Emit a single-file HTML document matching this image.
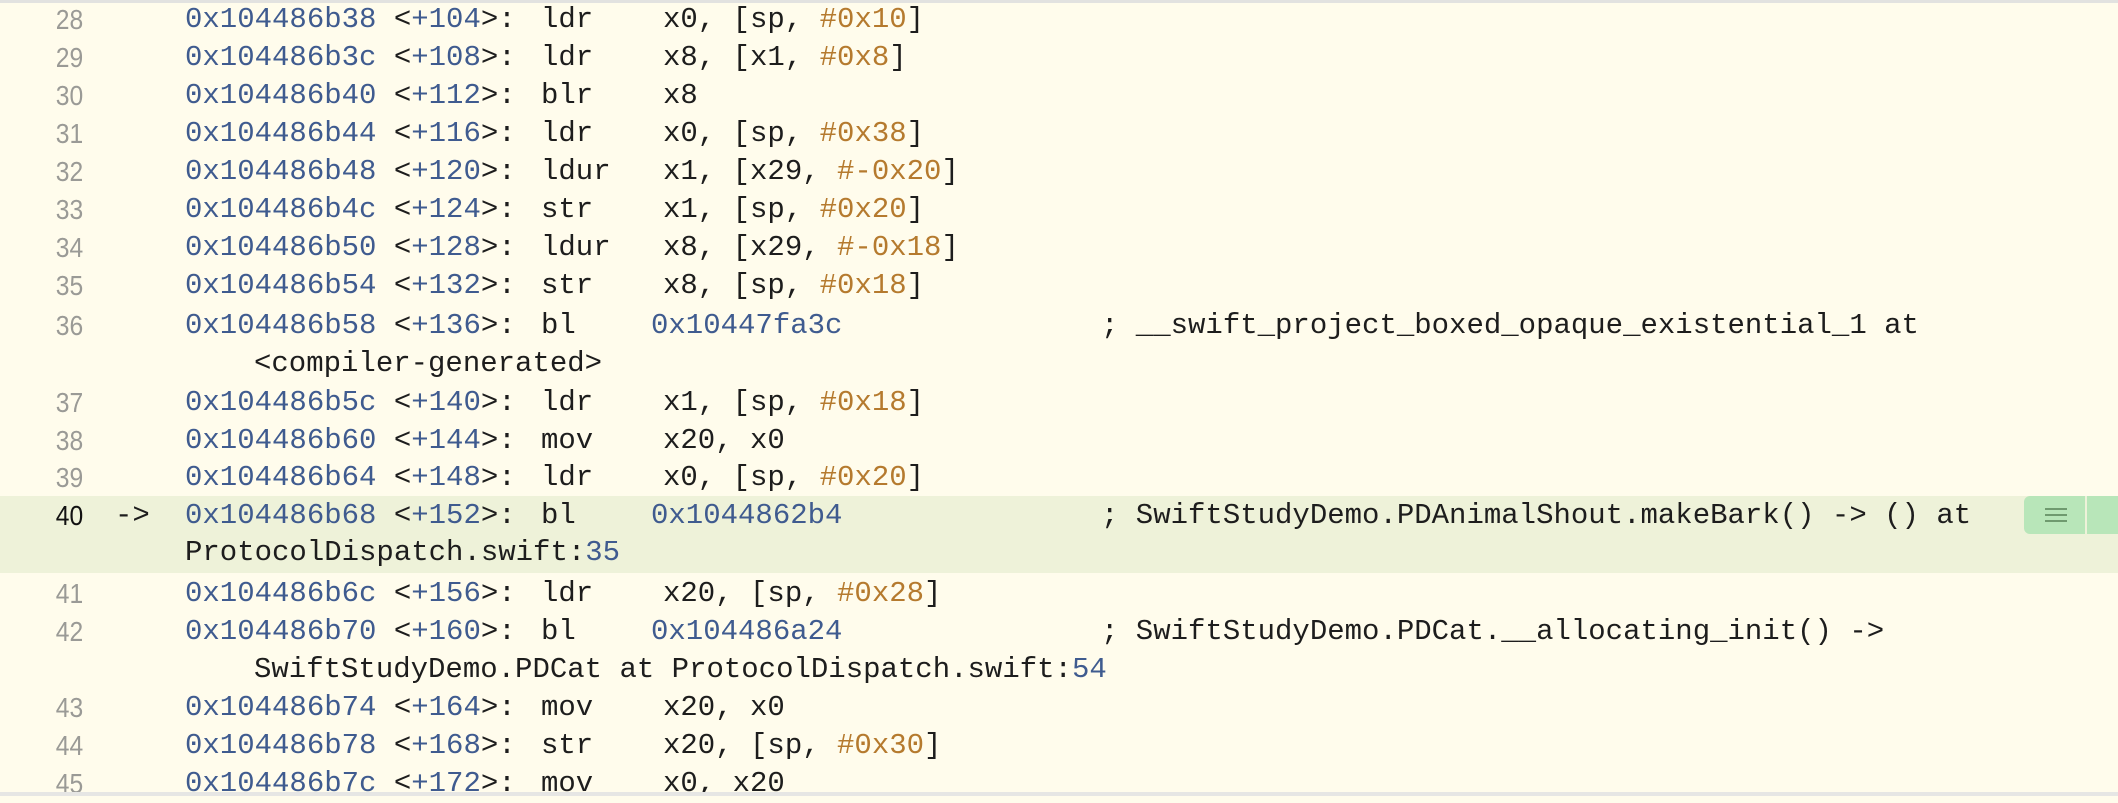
<!DOCTYPE html>
<html><head><meta charset="utf-8"><style>
html,body{margin:0;padding:0}
body{width:2118px;height:796px;background:#fffcec;position:relative;overflow:hidden;font-family:"Liberation Mono",monospace;font-size:29px;color:#1d1d1d}
.top{position:absolute;left:0;top:0;width:2118px;height:3px;background:#e2e2e0}
.bot{position:absolute;left:0;top:792px;width:2118px;height:4px;background:#e6e6e4}
.hl{position:absolute;left:0;top:496px;width:2118px;height:77px;background:#eef2d9}
.r{position:absolute;left:0;height:38px;line-height:38px;white-space:pre;width:2118px}
.n{position:absolute;right:2035px;font-family:"Liberation Sans",sans-serif;font-size:28px;color:#9a9a96;transform:scaleX(0.88);transform-origin:right center}
.r span{position:absolute}
.a{left:185px}.m{left:541px}.o{left:663px}.t{left:651px}.c{left:1101px}
.b{color:#3f5b8f}.y{color:#b57a2e}
i{font-style:normal}
.arrow{left:115px}
.mk{position:absolute;left:2024px;top:496px;width:61px;height:38px;background:#b8e6b9;border-radius:6px 0 0 6px}
.mk2{position:absolute;left:2087px;top:496px;width:31px;height:38px;background:#b8e6b9}
.bar{position:absolute;left:2045px;width:22px;height:2px;background:#6f9a6f}
</style></head><body>
<div class="top"></div>
<div class="hl"></div>
<div class="mk"></div><div class="mk2"></div>
<div class="bar" style="top:508px"></div><div class="bar" style="top:514px"></div><div class="bar" style="top:520px"></div>

<div class="r" style="top:1px"><span class="n">28</span><span class="a"><i class="b">0x104486b38</i> &lt;<i class="b">+104</i>&gt;: </span><span class="m">ldr</span><span class="o">x0, [sp, <i class="y">#0x10</i>]</span></div>
<div class="r" style="top:39px"><span class="n">29</span><span class="a"><i class="b">0x104486b3c</i> &lt;<i class="b">+108</i>&gt;: </span><span class="m">ldr</span><span class="o">x8, [x1, <i class="y">#0x8</i>]</span></div>
<div class="r" style="top:77px"><span class="n">30</span><span class="a"><i class="b">0x104486b40</i> &lt;<i class="b">+112</i>&gt;: </span><span class="m">blr</span><span class="o">x8</span></div>
<div class="r" style="top:115px"><span class="n">31</span><span class="a"><i class="b">0x104486b44</i> &lt;<i class="b">+116</i>&gt;: </span><span class="m">ldr</span><span class="o">x0, [sp, <i class="y">#0x38</i>]</span></div>
<div class="r" style="top:153px"><span class="n">32</span><span class="a"><i class="b">0x104486b48</i> &lt;<i class="b">+120</i>&gt;: </span><span class="m">ldur</span><span class="o">x1, [x29, <i class="y">#-0x20</i>]</span></div>
<div class="r" style="top:191px"><span class="n">33</span><span class="a"><i class="b">0x104486b4c</i> &lt;<i class="b">+124</i>&gt;: </span><span class="m">str</span><span class="o">x1, [sp, <i class="y">#0x20</i>]</span></div>
<div class="r" style="top:229px"><span class="n">34</span><span class="a"><i class="b">0x104486b50</i> &lt;<i class="b">+128</i>&gt;: </span><span class="m">ldur</span><span class="o">x8, [x29, <i class="y">#-0x18</i>]</span></div>
<div class="r" style="top:267px"><span class="n">35</span><span class="a"><i class="b">0x104486b54</i> &lt;<i class="b">+132</i>&gt;: </span><span class="m">str</span><span class="o">x8, [sp, <i class="y">#0x18</i>]</span></div>
<div class="r" style="top:307px"><span class="n">36</span><span class="a"><i class="b">0x104486b58</i> &lt;<i class="b">+136</i>&gt;: </span><span class="m">bl</span><span class="t b">0x10447fa3c</span><span class="c">; __swift_project_boxed_opaque_existential_1 at</span></div>
<div class="r" style="top:345px"><span style="left:254px">&lt;compiler-generated&gt;</span></div>
<div class="r" style="top:384px"><span class="n">37</span><span class="a"><i class="b">0x104486b5c</i> &lt;<i class="b">+140</i>&gt;: </span><span class="m">ldr</span><span class="o">x1, [sp, <i class="y">#0x18</i>]</span></div>
<div class="r" style="top:422px"><span class="n">38</span><span class="a"><i class="b">0x104486b60</i> &lt;<i class="b">+144</i>&gt;: </span><span class="m">mov</span><span class="o">x20, x0</span></div>
<div class="r" style="top:459px"><span class="n">39</span><span class="a"><i class="b">0x104486b64</i> &lt;<i class="b">+148</i>&gt;: </span><span class="m">ldr</span><span class="o">x0, [sp, <i class="y">#0x20</i>]</span></div>
<div class="r" style="top:497px"><span class="n" style="color:#111">40</span><span class="arrow">-&gt;</span><span class="a"><i class="b">0x104486b68</i> &lt;<i class="b">+152</i>&gt;: </span><span class="m">bl</span><span class="t b">0x1044862b4</span><span class="c">; SwiftStudyDemo.PDAnimalShout.makeBark() -&gt; () at</span></div>
<div class="r" style="top:534px"><span class="a">ProtocolDispatch.swift:<i class="b">35</i></span></div>
<div class="r" style="top:575px"><span class="n">41</span><span class="a"><i class="b">0x104486b6c</i> &lt;<i class="b">+156</i>&gt;: </span><span class="m">ldr</span><span class="o">x20, [sp, <i class="y">#0x28</i>]</span></div>
<div class="r" style="top:613px"><span class="n">42</span><span class="a"><i class="b">0x104486b70</i> &lt;<i class="b">+160</i>&gt;: </span><span class="m">bl</span><span class="t b">0x104486a24</span><span class="c">; SwiftStudyDemo.PDCat.__allocating_init() -&gt;</span></div>
<div class="r" style="top:651px"><span style="left:254px">SwiftStudyDemo.PDCat at ProtocolDispatch.swift:<i class="b">54</i></span></div>
<div class="r" style="top:689px"><span class="n">43</span><span class="a"><i class="b">0x104486b74</i> &lt;<i class="b">+164</i>&gt;: </span><span class="m">mov</span><span class="o">x20, x0</span></div>
<div class="r" style="top:727px"><span class="n">44</span><span class="a"><i class="b">0x104486b78</i> &lt;<i class="b">+168</i>&gt;: </span><span class="m">str</span><span class="o">x20, [sp, <i class="y">#0x30</i>]</span></div>
<div class="r" style="top:765px"><span class="n">45</span><span class="a"><i class="b">0x104486b7c</i> &lt;<i class="b">+172</i>&gt;: </span><span class="m">mov</span><span class="o">x0, x20</span></div>
<div class="bot"></div>
</body></html>
